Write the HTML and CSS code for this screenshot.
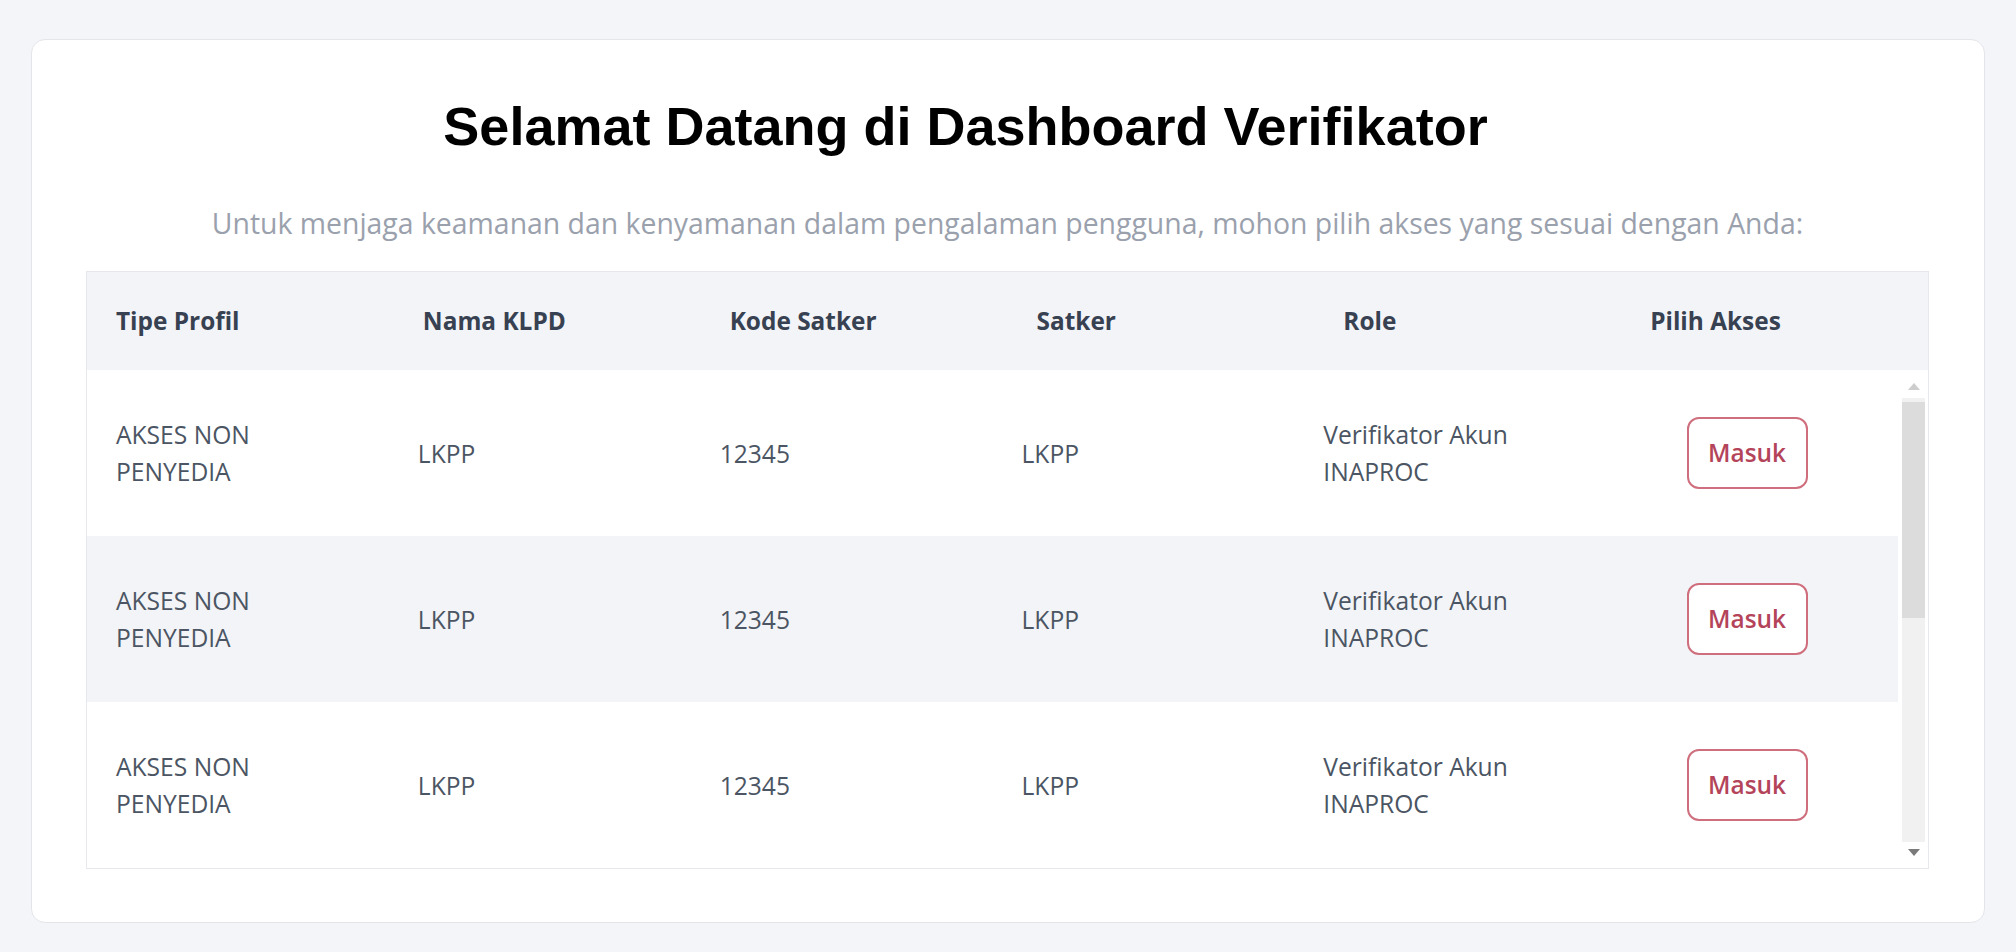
FILE: index.html
```html
<!DOCTYPE html>
<html lang="id">
<head>
<meta charset="utf-8">
<title>Dashboard Verifikator</title>
<link rel="stylesheet" href="styles.css">
</head>
<body>
<main class="card">
  <h1 class="title">Selamat Datang di Dashboard Verifikator</h1>
  <p class="subtitle">Untuk menjaga keamanan dan kenyamanan dalam pengalaman pengguna, mohon pilih akses yang sesuai dengan Anda:</p>
  <div class="table">
    <div class="thead">
      <div class="th">Tipe Profil</div>
      <div class="th">Nama KLPD</div>
      <div class="th">Kode Satker</div>
      <div class="th">Satker</div>
      <div class="th">Role</div>
      <div class="th">Pilih Akses</div>
    </div>
    <div class="tbody-wrap">
      <div class="tbody">
        <div class="tr">
          <div class="td">AKSES NON<br>PENYEDIA</div>
          <div class="td">LKPP</div>
          <div class="td">12345</div>
          <div class="td">LKPP</div>
          <div class="td">Verifikator Akun<br>INAPROC</div>
          <div class="td td-action"><button class="btn">Masuk</button></div>
        </div>
        <div class="tr alt">
          <div class="td">AKSES NON<br>PENYEDIA</div>
          <div class="td">LKPP</div>
          <div class="td">12345</div>
          <div class="td">LKPP</div>
          <div class="td">Verifikator Akun<br>INAPROC</div>
          <div class="td td-action"><button class="btn">Masuk</button></div>
        </div>
        <div class="tr">
          <div class="td">AKSES NON<br>PENYEDIA</div>
          <div class="td">LKPP</div>
          <div class="td">12345</div>
          <div class="td">LKPP</div>
          <div class="td">Verifikator Akun<br>INAPROC</div>
          <div class="td td-action"><button class="btn">Masuk</button></div>
        </div>
      </div>
      <div class="scrollbar" aria-hidden="true">
        <div class="sb-btn"><span class="arrow-up"></span></div>
        <div class="sb-track"><div class="sb-thumb"></div></div>
        <div class="sb-btn sb-btn-down"><span class="arrow-down"></span></div>
      </div>
    </div>
  </div>
</main>
</body>
</html>
```

FILE: styles.css
```css
* {
  box-sizing: border-box;
}

html, body {
  margin: 0;
  padding: 0;
}

body {
  background: #f4f5f8;
  padding: 39px 31px 29px;
  font-family: "Open Sans", "Noto Sans", sans-serif;
}

.card {
  background: #ffffff;
  border: 1px solid #e3e5ea;
  border-radius: 14px;
  padding: 54px 55px 53px 54px;
}

.title {
  margin: 0;
  padding-right: 84px;
  font-family: "Liberation Sans", Arial, sans-serif;
  font-weight: 700;
  font-size: 54px;
  line-height: 65px;
  color: #000000;
  text-align: center;
}

.subtitle {
  margin: 43px 0 27px;
  font-size: 28.4px;
  line-height: 42px;
  color: #9aa1ad;
  text-align: center;
}

.table {
  border: 1px solid #e6e8ec;
}

.thead {
  display: grid;
  grid-template-columns: repeat(6, 1fr);
  background: #f3f4f7;
  height: 98px;
  align-items: center;
}

.th {
  padding-left: 29px;
  font-weight: 700;
  font-size: 24.4px;
  line-height: 36px;
  color: #374151;
}

.tbody-wrap {
  display: flex;
  height: 498px;
  overflow: hidden;
}

.tbody {
  flex: 1;
  min-width: 0;
}

.tr {
  display: grid;
  grid-template-columns: repeat(6, 1fr);
  align-items: center;
  height: 166px;
  background: #ffffff;
}

.tr.alt {
  background: #f3f4f7;
}

.td {
  padding-left: 29px;
  font-size: 24.6px;
  line-height: 37px;
  color: #4b5563;
}

.td-action {
  padding-left: 0;
  display: flex;
  justify-content: center;
}

.btn {
  font-family: "Open Sans", "Noto Sans", sans-serif;
  font-weight: 600;
  font-size: 24.4px;
  line-height: 36px;
  color: #b4445a;
  background: #ffffff;
  border: 2px solid #cf6f7e;
  border-radius: 12px;
  padding: 16px 0;
  width: 121px;
  height: 72px;
}

.scrollbar {
  width: 30px;
  flex: none;
  display: flex;
  flex-direction: column;
  padding: 0 3px 0 4px;
  background: #ffffff;
}

.sb-btn {
  height: 28px;
  display: flex;
  align-items: center;
  justify-content: center;
  flex: none;
}

.sb-btn-down {
  height: 26px;
}

.arrow-up {
  width: 0;
  height: 0;
  border-left: 6px solid transparent;
  border-right: 6px solid transparent;
  border-bottom: 7px solid #cdcdcd;
  margin-top: 4px;
}

.arrow-down {
  width: 0;
  height: 0;
  border-left: 6px solid transparent;
  border-right: 6px solid transparent;
  border-top: 7px solid #7a7a7a;
  margin-bottom: 6px;
}

.sb-track {
  flex: 1;
  background: #f1f1f1;
  padding-top: 4px;
}

.sb-thumb {
  height: 216px;
  background: #dcdcdc;
}
```
